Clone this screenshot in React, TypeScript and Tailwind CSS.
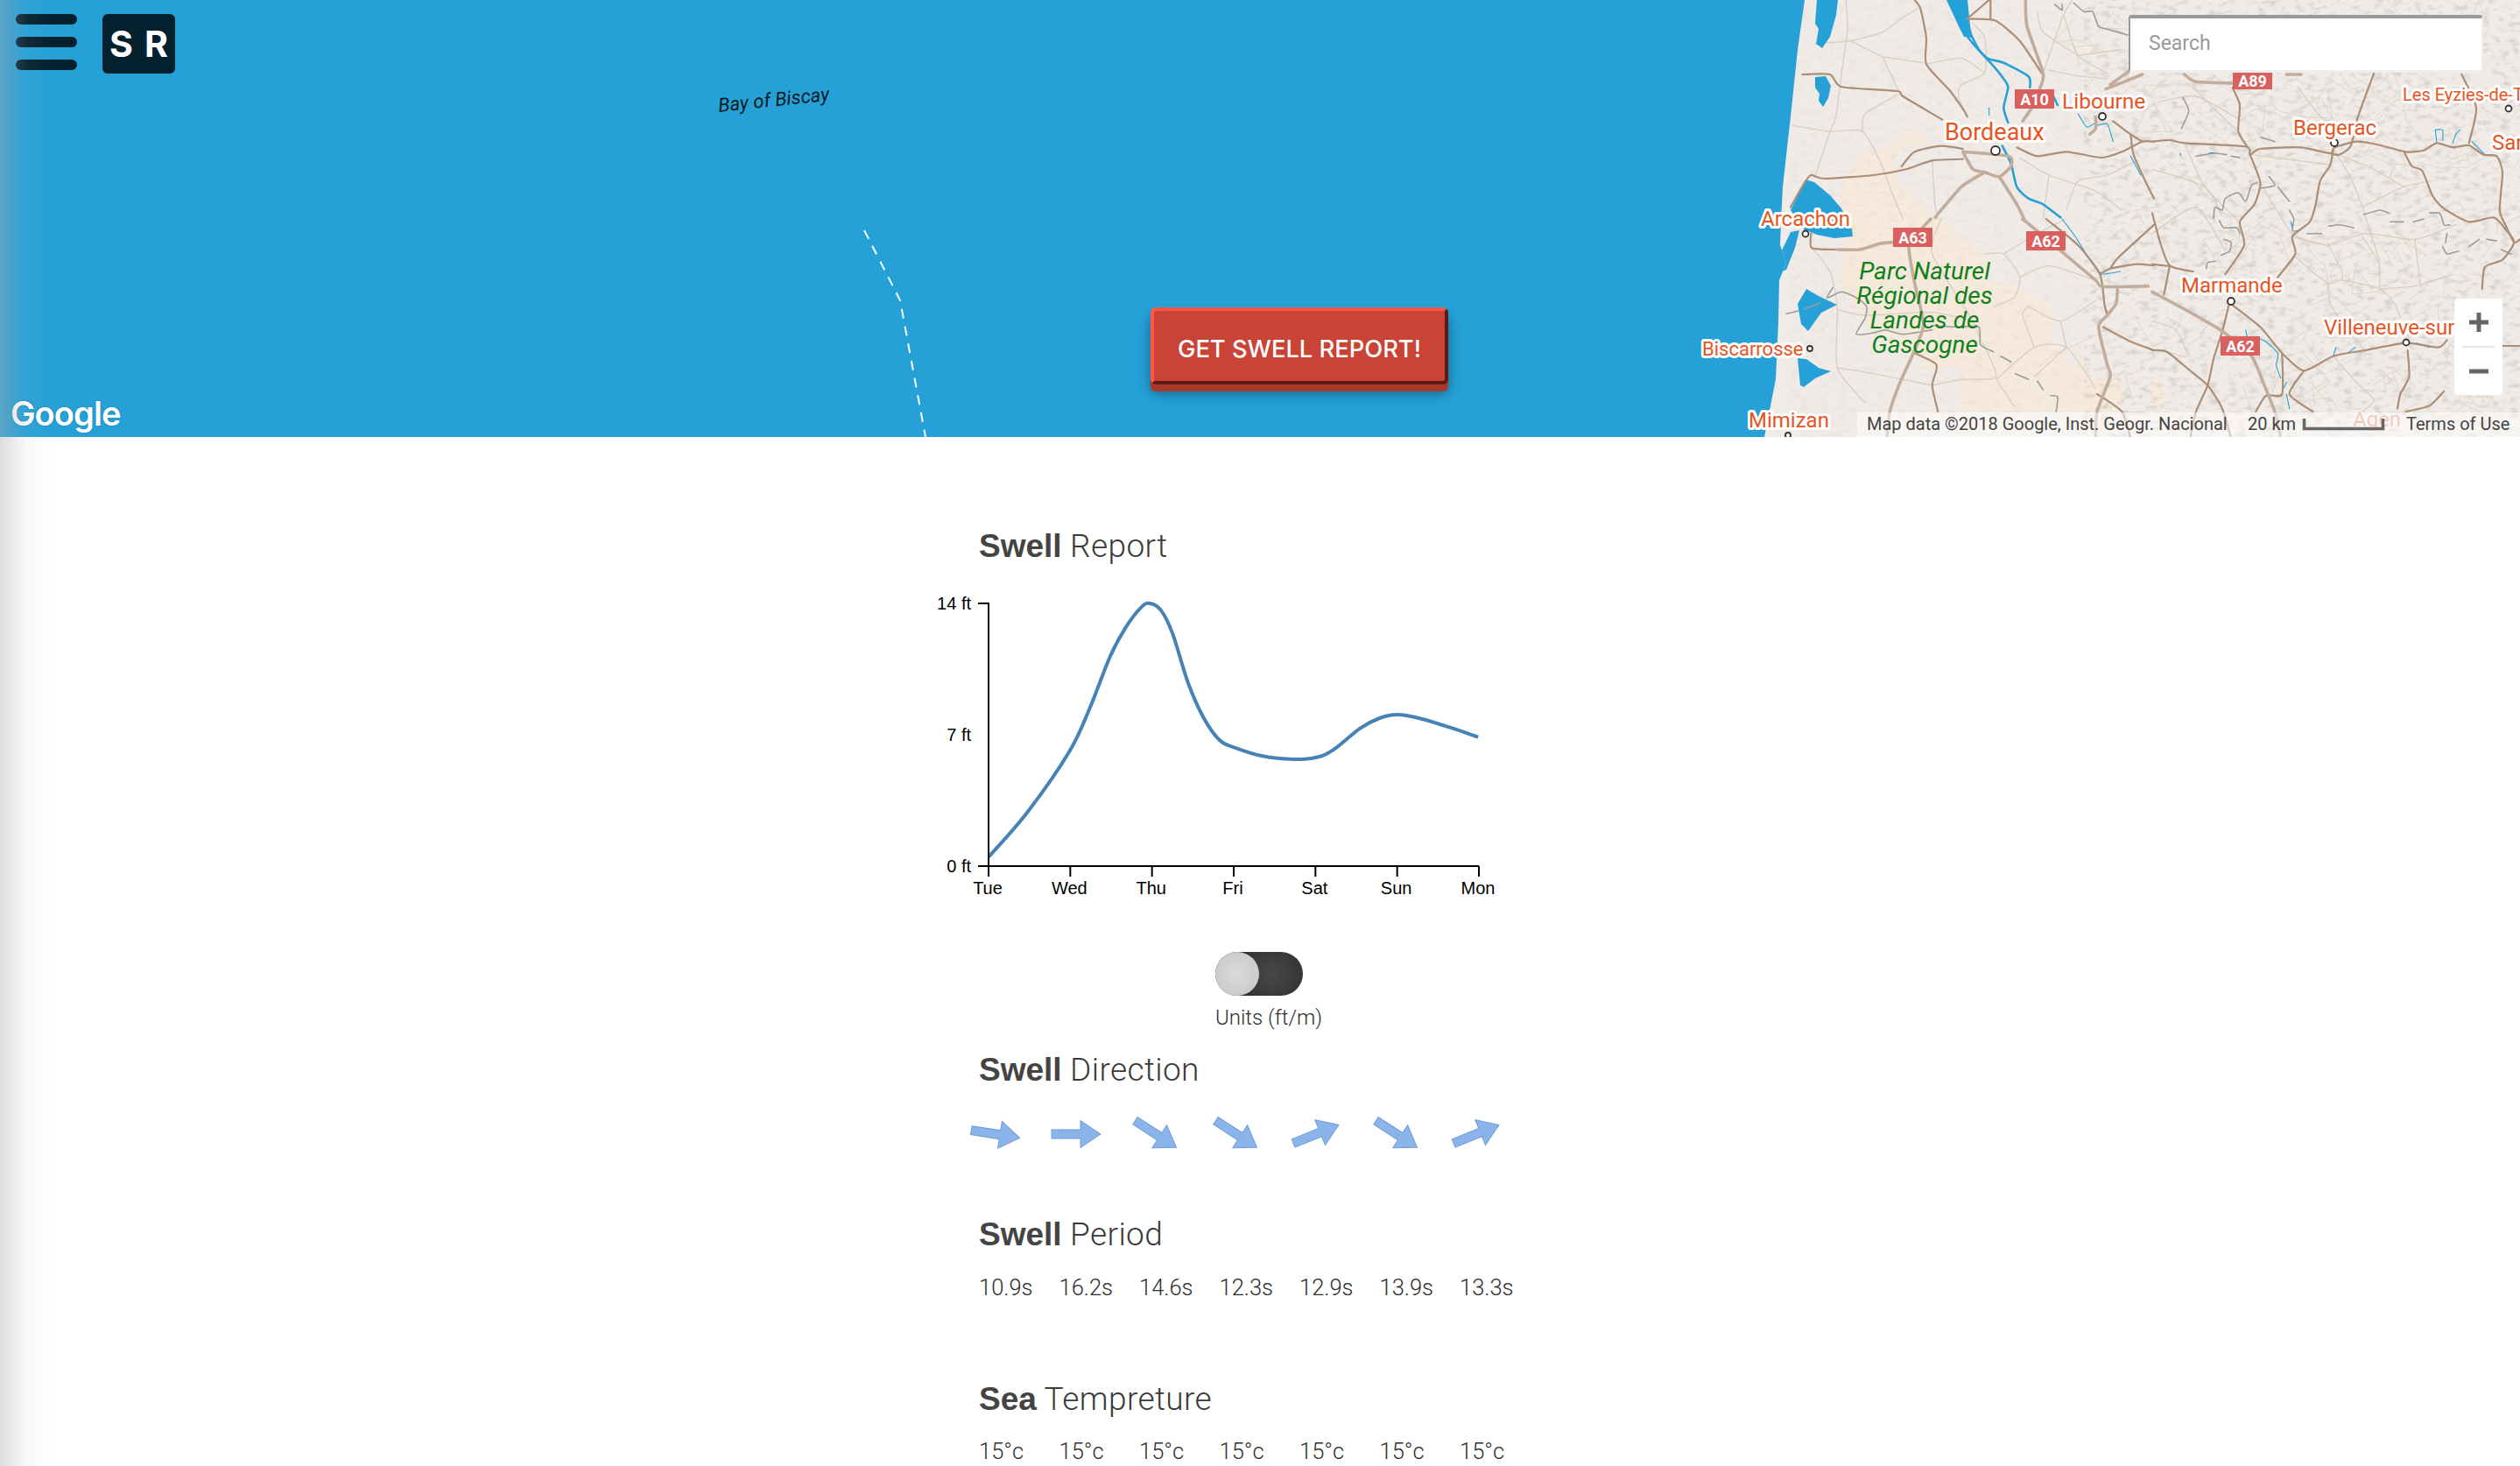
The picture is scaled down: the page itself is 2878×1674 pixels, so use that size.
import React from "react";

type Crop = "A" | "B" | "C" | "D";
type Trace = [Crop, number[]];
const origin: Record<Crop, [number, number]> = { A: [2040, 0], B: [2040, 250], C: [2458, 80], D: [2458, 250] };

const curve = ([c, a]: Trace) => {
  const [ox, oy] = origin[c];
  const p: [number, number][] = [];
  for (let i = 0; i < a.length; i += 2) p.push([ox + a[i] / 3, oy + a[i + 1] / 3]);
  let d = `M${p[0][0].toFixed(1)} ${p[0][1].toFixed(1)}`;
  const k = 0.11;
  for (let i = 0; i < p.length - 1; i++) {
    const m = p[Math.max(i - 1, 0)], b = p[i], n = p[i + 1], e = p[Math.min(i + 2, p.length - 1)];
    d += `C${(b[0] + (n[0] - m[0]) * k).toFixed(1)} ${(b[1] + (n[1] - m[1]) * k).toFixed(1)} ${(n[0] - (e[0] - b[0]) * k).toFixed(1)} ${(n[1] - (e[1] - b[1]) * k).toFixed(1)} ${n[0].toFixed(1)} ${n[1].toFixed(1)}`;
  }
  return d;
};

const motorways: Trace[] = [
  ["A", [820,0,825,90,880,250,870,300,840,370,810,415]],
  ["A", [605,520,640,580,680,590,730,605,770,570,770,540,730,530,605,520]],
  ["A", [680,590,600,640,510,745]],
  ["A", [730,605,790,700,815,750]],
  ["A", [1040,460,1060,440,1060,400]],
  ["A", [1095,305,1220,255]],
  ["A", [1110,290,1180,240]],
  ["B", [175,105,250,105,320,85,365,80]],
  ["B", [495,0,440,60,420,100,440,220,470,360,440,450,390,560,355,660,345,750]],
  ["B", [810,0,930,100,1060,210,1085,232,1240,230]],
  ["B", [1135,240,1130,290,1100,330,1070,370,1100,500,1110,540,1065,660,1060,750]],
  ["C", [110,15,150,40,275,45]],
  ["C", [460,15,510,15]],
  ["D", [0,250,130,320,240,385,340,470,380,560,420,660,440,750]],
];
const secondary: Trace[] = [
  ["A", [55,255,150,255,190,298,380,312,400,330,535,410]],
  ["A", [440,0,460,30,480,130,480,220,560,310,610,380,620,400]],
  ["A", [620,65,715,70,800,140,875,250]],
  ["A", [625,60,695,0]],
  ["A", [700,0,700,65]],
  ["A", [605,510,530,500,440,520,395,570]],
  ["A", [605,545,500,550,410,580,300,600,130,612,85,600,60,630,15,710]],
  ["A", [790,505,860,535,960,520,1080,540,1150,520,1220,485,1260,485]],
  ["A", [1180,460,1190,530,1230,620,1260,680]],
  ["A", [1120,415,1180,460,1220,485]],
  ["B", [85,50,88,100,175,105]],
  ["B", [890,0,1000,90,1075,190,1090,290,1100,330]],
  ["B", [1110,170,1140,130,1260,20]],
  ["B", [1075,190,1110,170,1200,155,1260,160]],
  ["B", [1085,370,1180,420,1260,450]],
  ["B", [440,460,515,500,500,570,520,660]],
  ["B", [1065,600,1150,660,1180,750]],
  ["C", [0,245,60,240,110,250,320,262,335,290,370,270,510,265,610,285,625,265,700,245,770,255,870,280,930,275,975,250,1030,265,1085,258,1135,290,1180,295,1200,350,1190,480,1210,530,1240,590,1260,580]],
  ["C", [275,60,300,120,295,210,325,262]],
  ["C", [760,10,705,160,680,260,640,290,610,285]],
  ["C", [1060,15,1110,130,1085,250]],
  ["C", [620,270,610,325,575,380,560,460,540,520,480,570,490,630,430,710]],
  ["C", [335,290,370,385,350,460,300,520,315,600,250,700]],
  ["C", [865,285,890,330,925,345,960,430,1000,475,1085,520,1170,505,1210,545,1240,590,1200,650,1140,675,1130,750]],
  ["C", [0,490,30,600,60,670,140,690]],
  ["C", [0,665,60,672]],
  ["D", [60,160,40,260]],
  ["D", [265,285,240,385,210,480,190,570,150,660,130,750]],
  ["D", [275,295,370,370,445,460,520,520,620,470,730,450,870,425,980,440,1010,415]],
  ["D", [445,460,445,600,390,605,355,660]],
  ["D", [520,520,470,600,550,660]],
  ["D", [0,450,50,455,130,520,190,570,240,650,270,750]],
  ["D", [875,450,880,540,850,600,840,650]],
  ["D", [1200,435,1260,435]],
  ["D", [1000,590,950,640,870,660]],
];
const minorRoads: Trace[] = [
  ["A", [205,0,210,100,190,250,170,400,150,450,120,540,100,600]],
  ["A", [100,150,220,140,330,110,400,60,450,30]],
  ["A", [330,195,470,215]],
  ["A", [330,195,390,320]],
  ["A", [220,140,330,195]],
  ["A", [20,430,150,450,260,450,320,550,370,680,400,750]],
  ["A", [260,450,270,390,390,320]],
  ["A", [640,80,680,130,680,250,600,290,590,330,610,380]],
  ["A", [480,220,600,200,680,250]],
  ["A", [880,250,950,50,980,0]],
  ["A", [950,50,1000,190,1100,250]],
  ["A", [900,240,1000,260,1100,270]],
  ["A", [1000,190,1150,170]],
  ["A", [860,40,880,110,1000,190]],
  ["A", [800,540,900,600,1050,650,1150,720]],
  ["A", [900,600,880,750]],
  ["A", [500,550,510,700,520,750]],
  ["A", [1200,550,1100,600,1000,620,960,720]],
  ["B", [90,100,150,180,175,300,175,510,270,630]],
  ["B", [175,310,270,330,500,320,640,350]],
  ["B", [530,0,500,120,640,350,660,400]],
  ["B", [680,120,745,120,800,200,780,270,710,300]],
  ["B", [745,120,860,50,960,0]],
  ["B", [800,200,900,160,1060,210]],
  ["B", [660,400,720,540,600,550,500,570]],
  ["B", [720,550,850,440,960,440,1060,580]],
  ["B", [940,350,960,440]],
  ["B", [830,300,940,350,1060,280]],
  ["B", [850,440,810,330,830,300]],
  ["B", [175,510,300,530,500,570]],
  ["B", [720,550,780,640]],
  ["B", [960,440,850,540]],
  ["C", [620,270,680,370,720,470,780,660]],
  ["C", [480,570,600,600,730,560,900,580,1040,530]],
  ["C", [900,580,920,750]],
  ["C", [720,470,860,400,960,380]],
  ["C", [640,290,760,340,860,400]],
  ["C", [370,385,480,560,600,600]],
  ["C", [340,290,500,310,610,325]],
  ["C", [110,250,180,400,300,520]],
  ["C", [0,340,180,400,240,500]],
  ["C", [140,60,240,160,295,210]],
  ["C", [20,110,150,90,300,170]],
  ["C", [500,60,560,140,620,200]],
  ["C", [0,560,150,470,250,620]],
  ["D", [490,130,600,220,650,210,780,240,830,290,850,340]],
  ["D", [600,80,650,180,650,210]],
  ["D", [780,240,775,150,720,60]],
  ["D", [780,240,900,230,1030,190]],
  ["D", [600,220,610,290,660,370,730,450]],
  ["D", [620,470,700,560,760,620,720,660]],
  ["D", [0,350,80,380,120,470,50,455]],
];
const greyRivers: Trace[] = [
  ["A", [920,15,945,35,945,15]],
  ["A", [985,10,1020,40,1050,40,1070,90,1100,100,1170,120]],
  ["B", [0,325,40,315]],
  ["B", [160,235,140,270,190,250,240,270,275,300,270,340,240,395,300,390,340,380,400,395,500,380]],
  ["B", [500,365,580,370,660,370,665,430,710,455]],
  ["B", [735,470,770,490]],
  ["B", [785,530,830,550]],
  ["B", [860,555,880,585]],
  ["B", [905,605,930,610,925,660]],
  ["C", [105,95,125,140,100,200]],
  ["C", [210,510,215,470,240,480,250,440,295,420,320,450,340,395,360,385]],
  ["C", [230,515,245,540,290,540,300,560]],
  ["C", [245,580,270,590,265,620,235,635]],
  ["C", [185,680,190,660,215,655]],
  ["C", [370,405,420,395,400,365]],
  ["C", [430,400,470,450]],
  ["C", [470,480,485,510,480,550,500,550]],
  ["C", [530,560,580,560]],
  ["C", [605,535,640,530,690,540]],
  ["C", [725,495,780,480,810,490]],
  ["C", [815,520,860,520]],
  ["C", [895,520,930,510]],
  ["C", [950,490,985,490,1000,530,1020,530]],
  ["C", [1010,560,1005,590]],
  ["C", [995,605,1010,630,1050,620]],
  ["C", [1085,605,1120,580]],
  ["C", [1145,580,1180,585]],
  ["C", [1195,615,1230,630]],
  ["C", [370,230,420,245]],
  ["C", [270,295,300,300]],
  ["C", [150,295,210,285,255,290]],
];
const wideWater: Trace[] = [
  ["A", [570,0,600,90,640,150,690,200,745,215,830,262,835,300]],
  ["A", [600,0,620,90,660,170,700,215,745,270,760,300,745,370,760,420]],
  ["A", [915,330,930,360]],
  ["A", [740,500,770,560,790,640,830,680,880,700,940,745]],
];
const thinWater: Trace[] = [
  ["B", [945,0,990,60,1040,140,1080,190]],
  ["B", [1085,190,1145,180]],
  ["A", [1000,390,1030,435,1060,420]],
  ["A", [1065,430,1100,425,1120,485]],
  ["A", [1180,535,1215,600]],
  ["A", [695,370,695,395]],
  ["C", [970,205,995,205,995,240]],
  ["C", [970,205,975,250]],
  ["C", [1055,205,1040,220,1030,250]],
  ["C", [195,285,210,283]],
  ["C", [95,285,98,295]],
  ["C", [475,520,480,540]],
  ["C", [1095,245,1140,290]],
  ["D", [320,380,330,410,380,415,430,460,425,500,440,545]],
  ["D", [460,600,470,650]],
  ["D", [460,560,450,580]],
  ["D", [480,580,490,555]],
  ["D", [620,470,630,440]],
  ["D", [670,460,695,440]],
  ["D", [905,425,950,440]],
];
const lakes = [
  "M2075 0L2099 0L2097 17L2090 42L2081 55L2074 50L2077 33L2073 27Z",
  "M2073 88L2085 87L2091 98L2088 112L2082 122L2077 115L2078 107L2073 100Z",
  "M2062 205L2072 208L2090 223L2103 238L2115 262L2116 270L2095 272L2075 268L2060 262L2045 240Z",
  "M2055 263L2050 283L2040 308L2030 312L2033 290L2045 265Z",
  "M2053 347L2063 330L2077 338L2098 348L2080 357L2065 378L2057 370Z",
  "M2053 409L2063 410L2077 420L2091 424L2073 432L2060 442L2056 440Z",
  "M2223 0L2247 0L2250 30L2253 43L2243 42L2237 30Z",
];
const coast = "M2061 0L2053 57L2045 133L2036 213L2034 253L2033 280L2040 300L2032 320L2031 367L2028 433L2015 499L2878 499L2878 0Z";
const beige = "M2170 153L2193 147L2205 162L2180 167L2163 177L2167 207L2193 233L2210 250L2217 250L2240 273L2267 290L2270 320L2303 327L2340 347L2347 363L2342 383L2357 407L2367 420L2377 407L2387 433L2417 430L2427 450L2417 470L2240 470L2240 420L2183 423L2203 413L2140 383L2100 320L2107 287L2100 240L2103 213L2123 177L2157 167Z";

function minorLines() {
  let s = 17;
  const r = () => {
    s = (s * 1664525 + 1013904223) % 4294967296;
    return s / 4294967296;
  };
  const out: string[] = [];
  for (let i = 0; i < 90; i++) {
    let x = 2380 + r() * 498;
    let y = r() * 499;
    let d = `M${x.toFixed(0)} ${y.toFixed(0)}`;
    for (let k = 0; k < 3; k++) {
      x += (r() - 0.5) * 70;
      y += (r() - 0.5) * 70;
      d += `L${x.toFixed(0)} ${y.toFixed(0)}`;
    }
    out.push(d);
  }
  return out;
}
const minor = minorLines();

const labels: [string, number, number, number][] = [
  ["Libourne", 2355, 115, 24.5],
  ["Les Eyzies-de-T", 2744, 108, 20],
  ["Bordeaux", 2221, 150, 27],
  ["Bergerac", 2619, 145, 24],
  ["Sar", 2846, 162, 24],
  ["Arcachon", 2011, 249, 24],
  ["Marmande", 2491, 325, 24],
  ["Villeneuve-sur", 2654, 373, 24],
  ["Biscarrosse", 1944, 398, 22],
  ["Mimizan", 1997, 479, 24],
];
const shields: [string, number, number, number][] = [
  ["A10", 2301, 102, 22],
  ["A89", 2550, 83, 19],
  ["A63", 2162, 260, 22],
  ["A62", 2314, 264, 22],
  ["A62", 2536, 384, 22],
];
const cities: [number, number, number][] = [
  [2279,172,5],[2401,133,4],[2062,267,3.5],[2666,163,4],[2548,344,4],[2748,391,3.5],[2067,398,3],[2865,124,3.5],[2042,497,3],
];
const parc = ["Parc Naturel", "Régional des", "Landes de", "Gascogne"];

function MapCanvas() {
  return (
    <svg className="absolute inset-0 block" width={2878} height={499} viewBox="0 0 2878 499">
      <defs>
        <filter id="hill" x="0" y="0" width="100%" height="100%">
          <feTurbulence type="fractalNoise" baseFrequency="0.09 0.16" numOctaves={3} seed={4} />
          <feColorMatrix type="matrix" values="0 0 0 0 0.35  0 0 0 0 0.33  0 0 0 0 0.3  2.4 0 0 0 -1.2" />
        </filter>
        <clipPath id="land"><path d={coast} /></clipPath>
      </defs>
      <rect width={2878} height={499} fill="#25a1d7" />
      <path d={coast} fill="#f0ebe6" />
      <path d={beige} fill="#f5eadb" />
      <path d="M2458 430L2468 437L2478 450L2458 470Z" fill="#f5eadb" />
      <g clipPath="url(#land)">
        <rect x={2380} y={0} width={498} height={499} filter="url(#hill)" opacity={0.4} />
        <rect x={2045} y={0} width={335} height={499} filter="url(#hill)" opacity={0.1} />
        <g fill="none" strokeLinejoin="round" strokeLinecap="round">
          {minor.map((d, i) => <path key={i} d={d} stroke="#e0d7cc" strokeWidth={1} />)}
          {minorRoads.map((t, i) => <path key={i} d={curve(t)} stroke="#dbcdc1" strokeWidth={1.3} />)}
          {greyRivers.map((t, i) => <path key={i} d={curve(t)} stroke="#9a9c9c" strokeWidth={1.6} />)}
          {wideWater.map((t, i) => <path key={i} d={curve(t)} stroke="#25a1d7" strokeWidth={2.6} />)}
          {thinWater.map((t, i) => <path key={i} d={curve(t)} stroke="#25a1d7" strokeWidth={1.1} />)}
        </g>
        <g fill="#25a1d7">
          {lakes.map((d, i) => <path key={i} d={d} />)}
        </g>
        <path d="M2060 353L2079 346" stroke="#9a9c9c" strokeWidth={1.6} />
        <g fill="none" strokeLinejoin="round" strokeLinecap="round">
          {secondary.map((t, i) => <path key={i} d={curve(t)} stroke="#ab8e77" strokeWidth={2.2} />)}
          {motorways.map((t, i) => <path key={i} d={curve(t)} stroke="#c2ad9d" strokeWidth={3.6} />)}
        </g>
      </g>
      <path d="M987 263L1025 337L1028 343L1057 499" fill="none" stroke="#ffffff" strokeWidth={2} strokeDasharray="11 9" />
      {cities.map(([x, y, r], i) => (
        <circle key={i} cx={x} cy={y} r={r} fill="#ffffff" stroke="#333333" strokeWidth={1.8} />
      ))}
      {shields.map(([t, x, y, h], i) => (
        <g key={i}>
          <rect x={x} y={y} width={45} height={h} fill="#d9605f" />
          <text x={x + 22.5} y={y + h / 2 + 6.5} textAnchor="middle" fill="#ffffff" className="font-['Roboto'] text-[18px] font-bold">{t}</text>
        </g>
      ))}
      {labels.map(([t, x, y, s], i) => (
        <text key={i} x={x} y={y + s * 0.36} fill="#e8541f" stroke="#ffffff" strokeWidth={6} strokeLinejoin="round" paintOrder="stroke" fontSize={s} className="font-['Roboto']">{t}</text>
      ))}
      {parc.map((t, i) => (
        <text key={i} x={2198} y={319 + i * 28} textAnchor="middle" fill="#10801a" className="font-['Roboto'] text-[28px] italic">{t}</text>
      ))}
      <text x={0} y={0} transform="translate(821 128) rotate(-6)" fill="#0a1a22" className="font-['Roboto'] text-[22px] italic">Bay of Biscay</text>
      <rect x={2121} y={471} width={757} height={28} fill="#ffffff" fillOpacity={0.5} />
      <text x={2687} y={487} fill="#e8541f" fillOpacity={0.3} stroke="#ffffff" strokeOpacity={0.4} strokeWidth={5} paintOrder="stroke" className="font-['Roboto'] text-[24px]">Agen</text>
      <text x={2132} y={491} fill="#444444" className="font-['Roboto'] text-[20px]">Map data ©2018 Google, Inst. Geogr. Nacional</text>
      <text x={2567} y={491} fill="#444444" className="font-['Roboto'] text-[20px]">20 km</text>
      <path d="M2631.5 478V489.5H2721.5V478" fill="none" stroke="#666666" strokeWidth={3.5} />
      <text x={2748} y={491} fill="#444444" className="font-['Roboto'] text-[20px]">Terms of Use</text>
    </svg>
  );
}

function Chart() {
  const src = [200,1165,300,1010,408,800,460,650,510,480,550,380,590,310,612,297,640,320,670,400,710,570,750,690,790,765,827,790,900,820,980,831,1036,825,1080,800,1150,725,1200,690,1245,678,1300,690,1380,722,1452,755];
  const p: [number, number][] = [];
  for (let i = 0; i < src.length; i += 2) p.push([1040 + src[i] / 2.24 - 1070, 590 + src[i + 1] / 3 - 670]);
  let d = `M${p[0][0]} ${p[0][1]}`;
  for (let i = 0; i < p.length - 1; i++) {
    const a = p[Math.max(i - 1, 0)], b = p[i], c = p[i + 1], e = p[Math.min(i + 2, p.length - 1)];
    d += `C${b[0] + (c[0] - a[0]) / 6} ${b[1] + (c[1] - a[1]) / 6} ${c[0] - (e[0] - b[0]) / 6} ${c[1] - (e[1] - b[1]) / 6} ${c[0]} ${c[1]}`;
  }
  const days = ["Tue", "Wed", "Thu", "Fri", "Sat", "Sun", "Mon"];
  const ys: [string, number][] = [["14 ft", 19], ["7 ft", 169], ["0 ft", 319]];
  return (
    <svg className="block -ml-[48px] mt-[24px]" width={680} height={360} viewBox="0 0 680 360">
      <path d={d} fill="none" stroke="#4682b4" strokeWidth={4} />
      <path d="M47 19H59V319H47M59 319H619" fill="none" stroke="#000000" strokeWidth={2} />
      {ys.map(([t, y]) => (
        <text key={t} x={39} y={y + 7} textAnchor="end" fill="#000000" className="font-['Liberation_Sans'] text-[20px]">{t}</text>
      ))}
      {days.map((t, i) => {
        const x = 59 + (i * 560) / 6;
        return (
          <g key={t}>
            <path d={`M${x} 319V331`} stroke="#000000" strokeWidth={2} />
            <text x={x - 1} y={351} textAnchor="middle" fill="#000000" className="font-['Liberation_Sans'] text-[20px]">{t}</text>
          </g>
        );
      })}
    </svg>
  );
}

function Heading({ bold, rest, className }: { bold: string; rest: string; className: string }) {
  return (
    <h2 className={`h-[44px] leading-[44px] text-[37px] text-[#444444] font-['Liberation_Sans'] ${className}`}>
      <strong className="font-bold">{bold}</strong>
      <span className="font-['Roboto'] font-light tracking-[0.4px] text-[#3a3a3a]"> {rest}</span>
    </h2>
  );
}

function Values({ items, className }: { items: string[]; className: string }) {
  return (
    <div className={`flex h-[30px] items-center text-[25.5px] text-[#2e2e2e] font-['Roboto'] font-light ${className}`}>
      {items.map((t, i) => (
        <span key={i} className="w-[91.5px] shrink-0">{t}</span>
      ))}
    </div>
  );
}

const arrowAngles = [9, 0, 33, 33, -22, 33, -22];

export default function App() {
  return (
    <div className="relative h-[1674px] w-[2878px] overflow-hidden bg-white">
      <header className="relative h-[499px]">
        <MapCanvas />
        <div className="absolute left-[18px] top-[16px] flex h-[64px] w-[70px] flex-col justify-between">
          <span className="h-[12px] rounded-full bg-[#03202e]" />
          <span className="h-[12px] rounded-full bg-[#03202e]" />
          <span className="h-[12px] rounded-full bg-[#03202e]" />
        </div>
        <div className="absolute left-[117px] top-[16px] flex h-[68px] w-[83px] items-center justify-center gap-[13px] rounded-md bg-[#03202e] pt-[1px] font-['Inter'] text-[41px] font-bold leading-none text-white">
          <span>S</span>
          <span>R</span>
        </div>
        <span className="absolute left-[12px] top-[444px] font-['Inter'] text-[38px] font-semibold leading-[56px] tracking-[-0.9px] text-white [text-shadow:0_0_2px_rgba(0,0,0,0.25)]">Google</span>
        <button className="absolute left-[1314px] top-[351px] flex h-[88px] w-[340px] items-center justify-center rounded-md border-4 border-t-[#ff5544] border-r-[#5f1a12] border-b-[#5f1a12] border-l-[#ff5544] bg-[#c94436] pt-[8px] font-['Inter'] text-[27.3px] font-medium text-white shadow-[0_8px_0_#a83a2c,0_10px_14px_rgba(0,0,0,0.4)]">
          GET SWELL REPORT!
        </button>
        <div className="absolute left-[2431px] top-[17px] flex h-[66px] w-[405px] items-center rounded border-t-4 border-r-2 border-b-[3px] border-l-2 border-t-[#999999] border-r-[#eeeeee] border-b-[#eeeeee] border-l-[#999999] bg-white pl-[21px] font-['Roboto'] text-[23px] text-[#999999]">
          Search
        </div>
        <div className="absolute left-[2803px] top-[341px] flex h-[110px] w-[55px] flex-col items-center rounded bg-white">
          <span className="flex h-[54px] w-full items-center justify-center">
            <svg width={22} height={22} viewBox="0 0 22 22"><path d="M0 11H22M11 0V22" stroke="#666666" strokeWidth={5} /></svg>
          </span>
          <span className="h-[2px] w-[37px] bg-[#e6e6e6]" />
          <span className="flex h-[54px] w-full items-center justify-center">
            <svg width={22} height={6} viewBox="0 0 22 6"><path d="M0 3H22" stroke="#666666" strokeWidth={5} /></svg>
          </span>
        </div>
      </header>

      <main className="mx-auto w-[642px]">
        <Heading bold="Swell" rest="Report" className="mt-[103px]" />
        <Chart />
        <div className="ml-[270px] mt-[57px] flex flex-col">
          <div className="relative h-[50px] w-[100px] rounded-full bg-[radial-gradient(circle_at_65%_50%,#484848,#222222)]">
            <span className="absolute left-0 top-0 h-[50px] w-[50px] rounded-full bg-[radial-gradient(circle,#dcdcdc,#c4c4c4)]" />
          </div>
          <span className="mt-[10px] h-[30px] font-['Roboto'] text-[24px] font-light leading-[30px] text-[#2e2e2e]">Units (ft/m)</span>
        </div>
        <Heading bold="Swell" rest="Direction" className="mt-[23px]" />
        <div className="-ml-[26.5px] mt-[31px] flex h-[40px]">
          {arrowAngles.map((a, i) => (
            <span key={i} className="flex w-[91.5px] shrink-0 items-center justify-center">
              <svg width={62} height={44} viewBox="-31 -22 62 44" className="overflow-visible">
                <path d="M-28 -5H5V-15.5L28 0L5 15.5V5H-28Z" transform={`rotate(${a})`} fill="#8ab4ea" stroke="#6f9bd8" strokeWidth={1} />
              </svg>
            </span>
          ))}
        </div>
        <Heading bold="Swell" rest="Period" className="mt-[73px]" />
        <Values items={["10.9s", "16.2s", "14.6s", "12.3s", "12.9s", "13.9s", "13.3s"]} className="mt-[23px]" />
        <Heading bold="Sea" rest="Tempreture" className="mt-[91px]" />
        <Values items={["15°c", "15°c", "15°c", "15°c", "15°c", "15°c", "15°c"]} className="mt-[22px]" />
      </main>

      <div className="pointer-events-none absolute inset-y-0 left-0 w-[60px] bg-gradient-to-r from-[#aaaaaa66] via-[#aaaaaa14] to-transparent" />
    </div>
  );
}
